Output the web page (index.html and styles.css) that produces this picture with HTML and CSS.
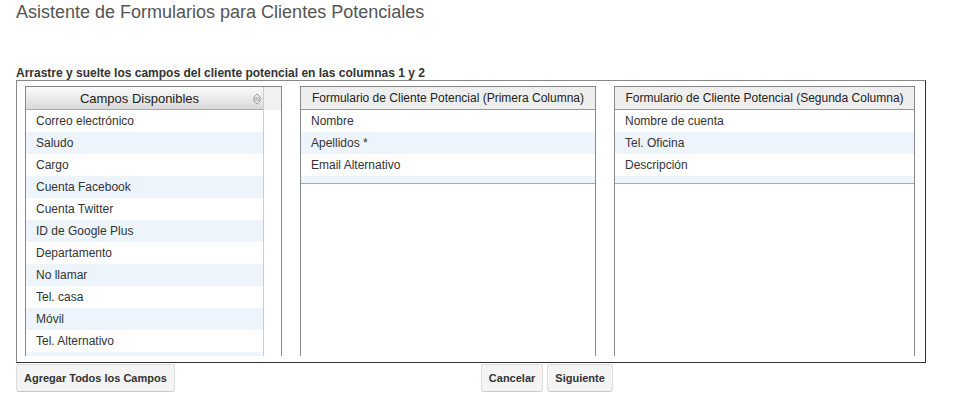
FILE: index.html
```html
<!DOCTYPE html>
<html lang="es">
<head>
    <meta charset="UTF-8">
    <meta name="viewport" content="width=device-width, initial-scale=1.0">
    <title>Asistente de Formularios</title>
    <link rel="stylesheet" href="styles.css">
</head>
<body>
    <h1>Asistente de Formularios para Clientes Potenciales</h1>
    <p class="hint">Arrastre y suelte los campos del cliente potencial en las columnas 1 y 2</p>

    <div class="board">
        <div class="panel panel-available">
            <div class="available-main">
                <div class="available-head">
                    <span>Campos Disponibles</span>
                    <svg class="sort" width="10" height="12" viewBox="0 0 10 12">
                        <path d="M1 5 L5 1 L9 5 Z" fill="none" stroke="#a0a0a0" stroke-width="1"/>
                        <path d="M1 7 L5 11 L9 7 Z" fill="none" stroke="#a0a0a0" stroke-width="1"/>
                    </svg>
                </div>
                <ul class="fields">
                    <li>Correo electrónico</li>
                    <li>Saludo</li>
                    <li>Cargo</li>
                    <li>Cuenta Facebook</li>
                    <li>Cuenta Twitter</li>
                    <li>ID de Google Plus</li>
                    <li>Departamento</li>
                    <li>No llamar</li>
                    <li>Tel. casa</li>
                    <li>Móvil</li>
                    <li>Tel. Alternativo</li>
                    <li></li>
                </ul>
            </div>
            <div class="gutter"><div class="gutter-head"></div></div>
        </div>

        <div class="panel panel-col1">
            <div class="col-head">Formulario de Cliente Potencial (Primera Columna)</div>
            <ul class="fields bordered">
                <li>Nombre</li>
                <li>Apellidos *</li>
                <li>Email Alternativo</li>
                <li class="filler"></li>
            </ul>
        </div>

        <div class="panel panel-col2">
            <div class="col-head">Formulario de Cliente Potencial (Segunda Columna)</div>
            <ul class="fields bordered">
                <li>Nombre de cuenta</li>
                <li>Tel. Oficina</li>
                <li>Descripción</li>
                <li class="filler"></li>
            </ul>
        </div>
    </div>

    <div class="actions">
        <button class="btn">Agregar Todos los Campos</button>
        <div class="nav">
            <button class="btn">Cancelar</button>
            <button class="btn">Siguiente</button>
        </div>
    </div>
</body>
</html>
```

FILE: styles.css
```css
body {
    margin: 0;
    padding: 1px 16px 0;
    font-family: "Liberation Sans", Arial, sans-serif;
    color: #333;
    background: #fff;
}
h1 {
    margin: 0;
    font-size: 18px;
    font-weight: normal;
    line-height: 22px;
    color: #555;
}
.hint {
    margin: 43px 0 0;
    font-size: 12px;
    font-weight: bold;
    line-height: 14px;
    color: #333;
}
.board {
    display: flex;
    gap: 18px;
    width: 900px;
    height: 276px;
    padding: 5px 0 0 8px;
    border: 1px solid #333;
    border-top-color: #888;
    border-left-color: #888;
    overflow: hidden;
}
.panel {
    height: 269px;
    border: 1px solid #888;
    border-bottom: none;
    overflow: hidden;
    font-size: 12px;
}
.panel-available {
    display: flex;
    width: 255px;
}
.available-main {
    width: 237px;
    border-right: 1px solid #ccc;
}
.available-head {
    position: relative;
    height: 22px;
    line-height: 23px;
    padding-right: 10px;
    text-align: center;
    font-size: 13px;
    color: #222;
    background: linear-gradient(#fafafa, #e9e9e9 55%, #d8d8d8);
    border-bottom: 1px solid #aaa;
}
.sort {
    position: absolute;
    right: 1px;
    top: 6px;
}
.gutter {
    flex: 1;
}
.gutter-head {
    height: 23px;
    background: #f1f1f1;
}
.panel-col1 {
    width: 294px;
}
.panel-col2 {
    width: 299px;
}
.col-head {
    height: 22px;
    line-height: 22px;
    text-align: center;
    background: #eee;
    border-bottom: 1px solid #999;
    color: #222;
}
.fields {
    list-style: none;
    margin: 0;
    padding: 0;
}
.fields.bordered {
    border-bottom: 1px solid #aaa;
}
.fields li {
    height: 22px;
    line-height: 23px;
    padding-left: 10px;
    color: #333;
}
.fields li:nth-child(even) {
    background: #edf4fc;
}
.fields li.filler {
    height: 7px;
}
.actions {
    display: flex;
    margin-top: 1px;
}
.nav {
    display: flex;
    gap: 4px;
    margin-left: 306px;
}
.btn {
    height: 28px;
    padding: 0 7px;
    font-family: "Liberation Sans", Arial, sans-serif;
    font-size: 11px;
    font-weight: bold;
    color: #333;
    background: #f4f4f4;
    border: 1px solid #ddd;
    border-bottom-color: #c8c8c8;
    border-radius: 3px;
}
```
